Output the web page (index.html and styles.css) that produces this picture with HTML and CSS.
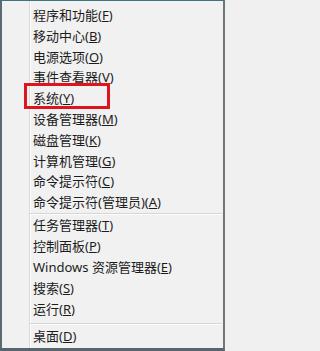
FILE: index.html
```html
<!DOCTYPE html>
<html lang="zh-CN">
<head>
<meta charset="utf-8">
<title>菜单</title>
<link rel="stylesheet" href="styles.css">
</head>
<body>
<div class="menu">
  <div class="gutter"></div>
  <div class="list">
    <div class="group first">
      <div class="item">程序和功能(<u>F</u>)</div>
      <div class="item">移动中心(<u>B</u>)</div>
      <div class="item">电源选项(<u>O</u>)</div>
      <div class="item">事件查看器(<u>V</u>)</div>
      <div class="item">系统(<u>Y</u>)</div>
      <div class="item">设备管理器(<u>M</u>)</div>
      <div class="item">磁盘管理(<u>K</u>)</div>
      <div class="item">计算机管理(<u>G</u>)</div>
      <div class="item">命令提示符(<u>C</u>)</div>
      <div class="item">命令提示符(管理员)(<u>A</u>)</div>
    </div>
    <div class="sep"></div>
    <div class="group second">
      <div class="item">任务管理器(<u>T</u>)</div>
      <div class="item">控制面板(<u>P</u>)</div>
      <div class="item">Windows 资源管理器(<u>E</u>)</div>
      <div class="item">搜索(<u>S</u>)</div>
      <div class="item">运行(<u>R</u>)</div>
    </div>
    <div class="sep sep-last"></div>
    <div class="group third">
      <div class="item">桌面(<u>D</u>)</div>
    </div>
  </div>
  <div class="highlight"></div>
</div>
</body>
</html>
```
FILE: styles.css
```css
html, body {
  margin: 0;
  padding: 0;
  background: #f0f0f0;
}
.menu {
  position: relative;
  box-sizing: border-box;
  width: 225px;
  height: 351px;
  display: flex;
  background: #f1f1f1;
  border-top: 1px solid #3d7480;
  border-left: 2px solid #5b6a70;
  border-right: 2px solid #6b777b;
  border-bottom: 3px solid #56666c;
  font-family: "Noto Sans", "Noto Sans CJK SC", sans-serif;
  font-size: 13px;
  color: #1c1c1c;
}
.gutter {
  width: 27px;
  flex: none;
}
.list {
  flex: 1;
  border-left: 1px solid #dadada;
  box-shadow: inset 1px 0 0 #fcfcfc;
  padding-top: 4px;
}
.group {
  display: flex;
  flex-direction: column;
}
.item {
  height: 20.8px;
  line-height: 20.8px;
  padding-left: 3px;
  white-space: nowrap;
}
.second .item {
  height: 21px;
  line-height: 21px;
}
.third .item {
  height: 21px;
  line-height: 21px;
}
u {
  text-decoration-thickness: 1px;
  text-underline-offset: 1px;
}
.sep {
  height: 1px;
  background: #d6d6d6;
  border-bottom: 1px solid #fdfdfd;
  margin-right: 1px;
}
.sep-last {
  margin-top: 3px;
  margin-bottom: 1px;
}
.highlight {
  position: absolute;
  left: 22px;
  top: 82px;
  width: 86px;
  height: 26px;
  box-sizing: border-box;
  border: 3px solid #e0141e;
}
```
